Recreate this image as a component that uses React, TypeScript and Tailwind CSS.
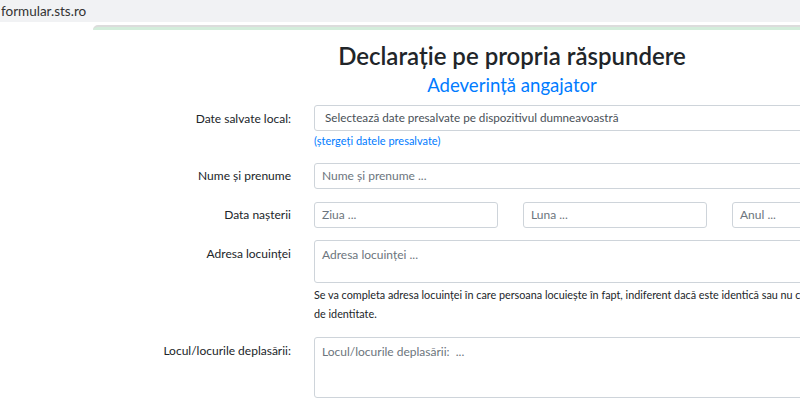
const font = { fontFamily: 'Lato, "Noto Sans", sans-serif' }

function Label({ children, top = false }: { children: React.ReactNode; top?: boolean }) {
    return (
        <div className={`w-[291px] shrink-0 text-right text-[12px] leading-[18px] text-[#212529] ${top ? 'pt-[5px]' : 'self-center'}`}>
            {children}
        </div>
    )
}

export default function App() {
    return (
        <div className="relative h-[399px] w-[800px] overflow-hidden bg-white" style={font}>
            {/* ── Browser address strip ── */}
            <div className="flex h-[22px] items-center bg-[#f1f2f4] pl-[1px] text-[13.5px] text-[#333]">
                formular.sts.ro
            </div>
            <div className="h-[3px] bg-white" />
            <div className="ml-[93px] h-[5px] rounded-tl-[6px] border-t-2 border-[#dcdcdc] bg-[#d3eddb]" />

            <div className="w-[1024px]">
                {/* ── Header ── */}
                <h1 className="mt-[10px] text-center text-[24px] font-semibold leading-[32px] text-[#212529]">
                    Declarație pe propria răspundere
                </h1>
                <h2 className="text-center text-[18.6px] leading-[26px] text-[#007bff]">Adeverință angajator</h2>

                {/* ── Form ── */}
                <div className="mt-[7px] flex gap-[23px]">
                    <Label top>Date salvate local:</Label>
                    <div className="flex-1">
                        <div className="flex h-[26px] w-[700px] items-center rounded-[3px] border border-[#ced4da] pl-[10px] text-[11.7px] text-[#495057]">
                            Selectează date presalvate pe dispozitivul dumneavoastră
                        </div>
                        <p className="mt-[2px] text-[11px] leading-[16px] text-[#007bff]">(ștergeți datele presalvate)</p>
                    </div>
                </div>

                <div className="mt-[14px] flex gap-[23px]">
                    <Label>Nume și prenume</Label>
                    <div className="flex h-[26px] w-[700px] items-center rounded-[3px] border border-[#ced4da] pl-[7px] text-[12px] text-[#6c757d]">
                        Nume și prenume ...
                    </div>
                </div>

                <div className="mt-[13px] flex gap-[23px]">
                    <Label>Data nașterii</Label>
                    <div className="flex gap-[25px]">
                        {['Ziua ...', 'Luna ...', 'Anul ...'].map((p) => (
                            <div key={p} className="flex h-[26px] w-[184px] items-center rounded-[3px] border border-[#ced4da] pl-[7px] text-[12px] text-[#6c757d]">
                                {p}
                            </div>
                        ))}
                    </div>
                </div>

                <div className="mt-[12px] flex gap-[23px]">
                    <Label top>Adresa locuinței</Label>
                    <div>
                        <div className="h-[43px] w-[700px] rounded-[3px] border border-[#ced4da] pl-[7px] pt-[5px] text-[12px] text-[#6c757d]">
                            Adresa locuinței ...
                        </div>
                        <p className="mt-[2px] whitespace-nowrap text-[10.8px] leading-[19px] text-[#212529]">
                            Se va completa adresa locuinței în care persoana locuiește în fapt, indiferent dacă este identică sau nu cu cea menționată în actul
                            <br />
                            de identitate.
                        </p>
                    </div>
                </div>

                <div className="mt-[14px] flex gap-[23px]">
                    <Label top>Locul/locurile deplasării:</Label>
                    <div className="h-[61px] w-[700px] rounded-[3px] border border-[#ced4da] pl-[7px] pt-[5px] text-[12px] text-[#6c757d]">
                        Locul/locurile deplasării:&nbsp; ...
                    </div>
                </div>
            </div>
        </div>
    )
}
